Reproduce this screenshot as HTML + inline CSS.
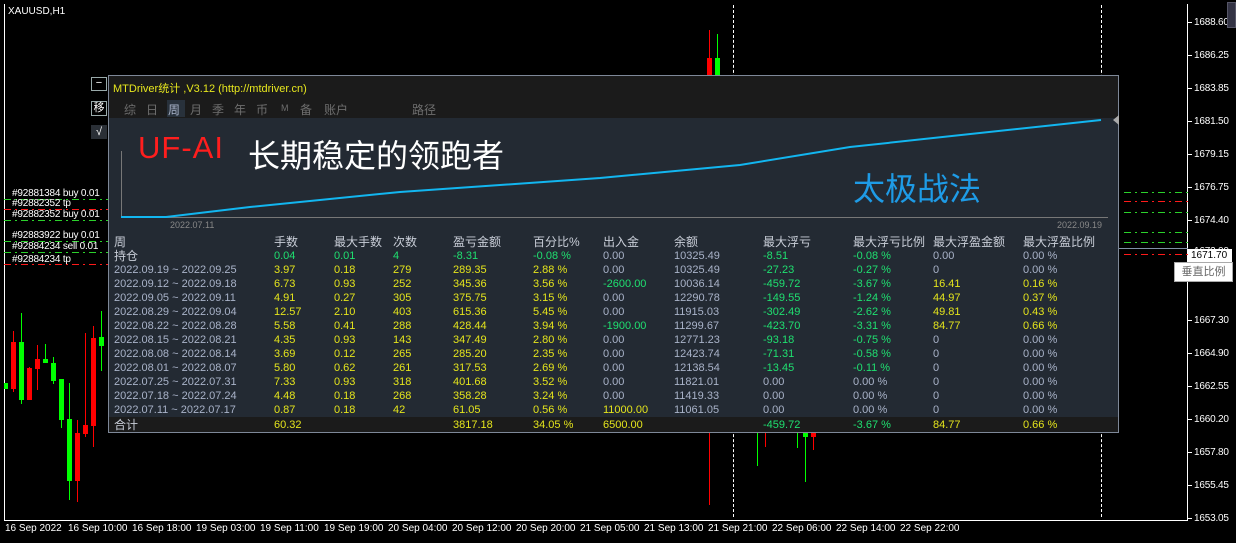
<!DOCTYPE html>
<html><head><meta charset="utf-8">
<style>
*{margin:0;padding:0;box-sizing:border-box}
body{width:1236px;height:543px;background:#000;position:relative;overflow:hidden;font-family:"Liberation Sans","Noto Sans CJK SC",sans-serif;font-size:11px}
.a{position:absolute;white-space:nowrap}
.pl{position:absolute;left:1194px;color:#fff;font-size:10px;letter-spacing:-0.2px}
.tk{position:absolute;left:1188px;width:4px;height:1px;background:#fff}
.tl{position:absolute;top:523px;color:#fff;font-size:10px}
.ol{position:absolute;left:12px;color:#fff;font-size:10px;line-height:11px;letter-spacing:-0.2px}
.hl{position:absolute;height:1px}
.g{background:repeating-linear-gradient(90deg,#2bd12b 0 7px,transparent 7px 11px,#2bd12b 11px 13px,transparent 13px 17px)}
.r{background:repeating-linear-gradient(90deg,#ff1a1a 0 7px,transparent 7px 11px,#ff1a1a 11px 13px,transparent 13px 17px)}
.tab{position:absolute;top:101px;color:#6e6e6e;font-size:12px}
.row{position:absolute;left:114px;height:14px;line-height:14px;font-size:11px}
.row span{position:absolute;top:0;white-space:nowrap}
.w{color:#a9b3c9}.y{color:#e4e41c}.gr{color:#1fe070}.h{color:#c9ced8}
</style></head><body>
<div class="a" style="left:8px;top:6px;color:#fff;font-size:10px">XAUUSD,H1</div>
<div class="a" style="left:4px;top:4px;width:1184px;height:517px;border:1px solid #fff;border-top:none"></div>
<div class="a" style="left:1101px;top:5px;width:0;height:512px;border-left:1px dashed #fff"></div>
<div class="a" style="left:733px;top:5px;width:0;height:512px;border-left:1px dashed #fff"></div>

<div class="pl" style="top:17px">1688.60</div><div class="tk" style="top:22px"></div>
<div class="pl" style="top:50px">1686.25</div><div class="tk" style="top:55px"></div>
<div class="pl" style="top:83px">1683.85</div><div class="tk" style="top:88px"></div>
<div class="pl" style="top:116px">1681.50</div><div class="tk" style="top:121px"></div>
<div class="pl" style="top:149px">1679.15</div><div class="tk" style="top:154px"></div>
<div class="pl" style="top:182px">1676.75</div><div class="tk" style="top:187px"></div>
<div class="pl" style="top:215px">1674.40</div><div class="tk" style="top:220px"></div>
<div class="pl" style="top:246px">1672.00</div>
<div class="a" style="left:1188px;top:249px;width:44px;height:14px;background:#fff;color:#000;font-size:10px;padding-left:3px;line-height:14px">1671.70</div>
<div class="a" style="left:1118px;top:248px;width:70px;height:1px;background:#8090a8"></div>
<div class="a" style="left:1174px;top:262px;width:59px;height:20px;background:#fff;border:1px solid #aaa;color:#666;font-size:11px;line-height:18px;text-align:center">垂直比例</div>
<div class="pl" style="top:315px">1667.30</div><div class="tk" style="top:320px"></div>
<div class="pl" style="top:348px">1664.90</div><div class="tk" style="top:353px"></div>
<div class="pl" style="top:381px">1662.55</div><div class="tk" style="top:386px"></div>
<div class="pl" style="top:414px">1660.20</div><div class="tk" style="top:419px"></div>
<div class="pl" style="top:447px">1657.80</div><div class="tk" style="top:452px"></div>
<div class="pl" style="top:480px">1655.45</div><div class="tk" style="top:485px"></div>
<div class="pl" style="top:513px">1653.05</div><div class="tk" style="top:518px"></div>
<div class="a" style="left:1227px;top:2px;width:9px;height:26px;background:#334;border:1px solid #556"></div>

<div class="tl" style="left:5px">16 Sep 2022</div>
<div class="tl" style="left:68px">16 Sep 10:00</div>
<div class="tl" style="left:132px">16 Sep 18:00</div>
<div class="tl" style="left:196px">19 Sep 03:00</div>
<div class="tl" style="left:260px">19 Sep 11:00</div>
<div class="tl" style="left:324px">19 Sep 19:00</div>
<div class="tl" style="left:388px">20 Sep 04:00</div>
<div class="tl" style="left:452px">20 Sep 12:00</div>
<div class="tl" style="left:516px">20 Sep 20:00</div>
<div class="tl" style="left:580px">21 Sep 05:00</div>
<div class="tl" style="left:644px">21 Sep 13:00</div>
<div class="tl" style="left:708px">21 Sep 21:00</div>
<div class="tl" style="left:772px">22 Sep 06:00</div>
<div class="tl" style="left:836px">22 Sep 14:00</div>
<div class="tl" style="left:900px">22 Sep 22:00</div>

<svg class="a" style="left:0;top:0" width="1236" height="543">
<g stroke-width="1">
<rect x="4" y="383" width="4" height="6" fill="#0f0"/>
<line x1="13.5" y1="331" x2="13.5" y2="392" stroke="#f00"/><rect x="11" y="342" width="5" height="47" fill="#f00"/>
<line x1="21.5" y1="313" x2="21.5" y2="404" stroke="#0f0"/><rect x="19" y="342" width="5" height="58" fill="#0f0"/>
<line x1="29.5" y1="367" x2="29.5" y2="400" stroke="#f00"/><rect x="27" y="368" width="5" height="32" fill="#f00"/>
<line x1="37.5" y1="345" x2="37.5" y2="390" stroke="#f00"/><rect x="35" y="359" width="5" height="10" fill="#f00"/>
<line x1="45.5" y1="344" x2="45.5" y2="363" stroke="#0f0"/><rect x="43" y="359" width="5" height="4" fill="#0f0"/>
<line x1="53.5" y1="357" x2="53.5" y2="384" stroke="#0f0"/><rect x="51" y="363" width="5" height="18" fill="#0f0"/>
<line x1="61.5" y1="379" x2="61.5" y2="428" stroke="#0f0"/><rect x="59" y="379" width="5" height="41" fill="#0f0"/>
<line x1="69.5" y1="383" x2="69.5" y2="500" stroke="#0f0"/><rect x="67" y="419" width="5" height="62" fill="#0f0"/>
<line x1="77.5" y1="420" x2="77.5" y2="502" stroke="#f00"/><rect x="75" y="433" width="5" height="48" fill="#f00"/>
<line x1="85.5" y1="333" x2="85.5" y2="437" stroke="#f00"/><rect x="83" y="425" width="5" height="9" fill="#f00"/>
<line x1="93.5" y1="326" x2="93.5" y2="447" stroke="#f00"/><rect x="91" y="338" width="5" height="88" fill="#f00"/>
<line x1="101.5" y1="311" x2="101.5" y2="371" stroke="#0f0"/><rect x="99" y="337" width="5" height="9" fill="#0f0"/>
<line x1="709.5" y1="30" x2="709.5" y2="77" stroke="#f00"/><rect x="707" y="58" width="5" height="19" fill="#f00"/>
<line x1="717.5" y1="34" x2="717.5" y2="77" stroke="#0f0"/><rect x="715" y="58" width="5" height="19" fill="#0f0"/>
<line x1="709.5" y1="432" x2="709.5" y2="505" stroke="#f00"/>
<line x1="757.5" y1="432" x2="757.5" y2="466" stroke="#0f0"/>
<line x1="765.5" y1="432" x2="765.5" y2="447" stroke="#f00"/>
<line x1="797.5" y1="432" x2="797.5" y2="448" stroke="#0f0"/>
<line x1="805.5" y1="432" x2="805.5" y2="482" stroke="#0f0"/><rect x="803" y="432" width="5" height="5" fill="#0f0"/>
<line x1="813.5" y1="432" x2="813.5" y2="450" stroke="#f00"/><rect x="811" y="432" width="5" height="5" fill="#f00"/>
</g></svg>

<div class="hl g" style="left:4px;top:199px;width:104px"></div>
<div class="hl r" style="left:4px;top:209px;width:104px"></div>
<div class="hl g" style="left:4px;top:220px;width:104px"></div>
<div class="hl g" style="left:4px;top:241px;width:104px"></div>
<div class="hl g" style="left:4px;top:252px;width:104px"></div>
<div class="hl r" style="left:4px;top:264px;width:104px"></div>
<div class="hl g" style="left:1124px;top:192px;width:64px"></div>
<div class="hl r" style="left:1124px;top:201px;width:64px"></div>
<div class="hl g" style="left:1124px;top:212px;width:64px"></div>
<div class="hl g" style="left:1124px;top:232px;width:64px"></div>
<div class="hl g" style="left:1124px;top:242px;width:64px"></div>
<div class="hl r" style="left:1124px;top:254px;width:64px"></div>
<div class="ol" style="top:188px">#92881384 buy 0.01</div>
<div class="ol" style="top:198px">#92882352 tp</div>
<div class="ol" style="top:209px">#92882352 buy 0.01</div>
<div class="ol" style="top:230px">#92883922 buy 0.01</div>
<div class="ol" style="top:241px">#92884234 sell 0.01</div>
<div class="ol" style="top:254px">#92884234 tp</div>

<div class="a" style="left:91px;top:77px;width:16px;height:14px;border:1px solid #9aa;color:#fff;font-size:11px;line-height:11px;text-align:center">−</div>
<div class="a" style="left:91px;top:101px;width:16px;height:15px;border:1px solid #9aa;color:#fff;font-size:11px;line-height:13px;text-align:center">移</div>
<div class="a" style="left:91px;top:125px;width:16px;height:14px;background:#2a2f36;color:#fff;font-size:11px;line-height:14px;text-align:center">√</div>

<div class="a" style="left:108px;top:75px;width:1011px;height:358px;background:#232a33;border:1px solid #7e8898"></div>
<div class="a" style="left:109px;top:76px;width:1009px;height:42px;background:#1b1b1b"></div>
<div class="a" style="left:113px;top:80px;color:#e6e61e;font-size:11px">MTDriver统计 ,V3.12 (http://mtdriver.cn)</div>
<div class="a" style="left:167px;top:100px;width:18px;height:17px;background:#28313b"></div>
<div class="tab" style="left:124px">综</div><div class="tab" style="left:146px">日</div>
<div class="tab" style="left:168px;color:#a9b3c9">周</div><div class="tab" style="left:190px">月</div>
<div class="tab" style="left:212px">季</div><div class="tab" style="left:234px">年</div>
<div class="tab" style="left:256px">币</div><div class="tab" style="left:281px;font-size:9px;top:103px">M</div>
<div class="tab" style="left:300px">备</div><div class="tab" style="left:324px">账户</div>
<div class="tab" style="left:412px">路径</div>

<svg class="a" style="left:108px;top:75px" width="1011" height="160">
<line x1="13.5" y1="76" x2="13.5" y2="143" stroke="#777"/>
<line x1="13" y1="142.5" x2="1000" y2="142.5" stroke="#777"/>
<polyline fill="none" stroke="#12b6f0" stroke-width="2" points="13,142 58,142 142,132 292,117 492,103 632,90 742,72 993,45"/>
<path d="M1011,40 L1005,45 L1011,50Z" fill="#aaa"/>
</svg>
<div class="a" style="left:138px;top:130px;color:#ff1e1e;font-size:31px;letter-spacing:1px">UF-AI</div>
<div class="a" style="left:248px;top:131px;color:#fff;font-size:32px">长期稳定的领跑者</div>
<div class="a" style="left:853px;top:164px;color:#1e9be6;font-size:32px">太极战法</div>
<div class="a" style="left:170px;top:220px;color:#888;font-size:9px">2022.07.11</div>
<div class="a" style="left:1057px;top:220px;color:#888;font-size:9px">2022.09.19</div>

<div class="a" style="left:109px;top:417px;width:1009px;height:15px;background:#1b1b1b"></div>

<div class="row h" style="top:235px;font-size:12px"><span style="left:0">周</span><span style="left:160px">手数</span><span style="left:220px">最大手数</span><span style="left:279px">次数</span><span style="left:339px">盈亏金额</span><span style="left:419px">百分比%</span><span style="left:489px">出入金</span><span style="left:560px">余额</span><span style="left:649px">最大浮亏</span><span style="left:739px">最大浮亏比例</span><span style="left:819px">最大浮盈金额</span><span style="left:909px">最大浮盈比例</span></div>
<div class="row" style="top:249px"><span class="h" style="left:0;font-size:12px">持仓</span><span class="gr" style="left:160px">0.04</span><span class="gr" style="left:220px">0.01</span><span class="gr" style="left:279px">4</span><span class="gr" style="left:339px">-8.31</span><span class="gr" style="left:419px">-0.08 %</span><span class="w" style="left:489px">0.00</span><span class="w" style="left:560px">10325.49</span><span class="gr" style="left:649px">-8.51</span><span class="gr" style="left:739px">-0.08 %</span><span class="w" style="left:819px">0.00</span><span class="w" style="left:909px">0.00 %</span></div>
<div class="row" style="top:263px"><span class="w" style="left:0">2022.09.19 ~ 2022.09.25</span><span class="y" style="left:160px">3.97</span><span class="y" style="left:220px">0.18</span><span class="y" style="left:279px">279</span><span class="y" style="left:339px">289.35</span><span class="y" style="left:419px">2.88 %</span><span class="w" style="left:489px">0.00</span><span class="w" style="left:560px">10325.49</span><span class="gr" style="left:649px">-27.23</span><span class="gr" style="left:739px">-0.27 %</span><span class="w" style="left:819px">0</span><span class="w" style="left:909px">0.00 %</span></div>
<div class="row" style="top:277px"><span class="w" style="left:0">2022.09.12 ~ 2022.09.18</span><span class="y" style="left:160px">6.73</span><span class="y" style="left:220px">0.93</span><span class="y" style="left:279px">252</span><span class="y" style="left:339px">345.36</span><span class="y" style="left:419px">3.56 %</span><span class="gr" style="left:489px">-2600.00</span><span class="w" style="left:560px">10036.14</span><span class="gr" style="left:649px">-459.72</span><span class="gr" style="left:739px">-3.67 %</span><span class="y" style="left:819px">16.41</span><span class="y" style="left:909px">0.16 %</span></div>
<div class="row" style="top:291px"><span class="w" style="left:0">2022.09.05 ~ 2022.09.11</span><span class="y" style="left:160px">4.91</span><span class="y" style="left:220px">0.27</span><span class="y" style="left:279px">305</span><span class="y" style="left:339px">375.75</span><span class="y" style="left:419px">3.15 %</span><span class="w" style="left:489px">0.00</span><span class="w" style="left:560px">12290.78</span><span class="gr" style="left:649px">-149.55</span><span class="gr" style="left:739px">-1.24 %</span><span class="y" style="left:819px">44.97</span><span class="y" style="left:909px">0.37 %</span></div>
<div class="row" style="top:305px"><span class="w" style="left:0">2022.08.29 ~ 2022.09.04</span><span class="y" style="left:160px">12.57</span><span class="y" style="left:220px">2.10</span><span class="y" style="left:279px">403</span><span class="y" style="left:339px">615.36</span><span class="y" style="left:419px">5.45 %</span><span class="w" style="left:489px">0.00</span><span class="w" style="left:560px">11915.03</span><span class="gr" style="left:649px">-302.49</span><span class="gr" style="left:739px">-2.62 %</span><span class="y" style="left:819px">49.81</span><span class="y" style="left:909px">0.43 %</span></div>
<div class="row" style="top:319px"><span class="w" style="left:0">2022.08.22 ~ 2022.08.28</span><span class="y" style="left:160px">5.58</span><span class="y" style="left:220px">0.41</span><span class="y" style="left:279px">288</span><span class="y" style="left:339px">428.44</span><span class="y" style="left:419px">3.94 %</span><span class="gr" style="left:489px">-1900.00</span><span class="w" style="left:560px">11299.67</span><span class="gr" style="left:649px">-423.70</span><span class="gr" style="left:739px">-3.31 %</span><span class="y" style="left:819px">84.77</span><span class="y" style="left:909px">0.66 %</span></div>
<div class="row" style="top:333px"><span class="w" style="left:0">2022.08.15 ~ 2022.08.21</span><span class="y" style="left:160px">4.35</span><span class="y" style="left:220px">0.93</span><span class="y" style="left:279px">143</span><span class="y" style="left:339px">347.49</span><span class="y" style="left:419px">2.80 %</span><span class="w" style="left:489px">0.00</span><span class="w" style="left:560px">12771.23</span><span class="gr" style="left:649px">-93.18</span><span class="gr" style="left:739px">-0.75 %</span><span class="w" style="left:819px">0</span><span class="w" style="left:909px">0.00 %</span></div>
<div class="row" style="top:347px"><span class="w" style="left:0">2022.08.08 ~ 2022.08.14</span><span class="y" style="left:160px">3.69</span><span class="y" style="left:220px">0.12</span><span class="y" style="left:279px">265</span><span class="y" style="left:339px">285.20</span><span class="y" style="left:419px">2.35 %</span><span class="w" style="left:489px">0.00</span><span class="w" style="left:560px">12423.74</span><span class="gr" style="left:649px">-71.31</span><span class="gr" style="left:739px">-0.58 %</span><span class="w" style="left:819px">0</span><span class="w" style="left:909px">0.00 %</span></div>
<div class="row" style="top:361px"><span class="w" style="left:0">2022.08.01 ~ 2022.08.07</span><span class="y" style="left:160px">5.80</span><span class="y" style="left:220px">0.62</span><span class="y" style="left:279px">261</span><span class="y" style="left:339px">317.53</span><span class="y" style="left:419px">2.69 %</span><span class="w" style="left:489px">0.00</span><span class="w" style="left:560px">12138.54</span><span class="gr" style="left:649px">-13.45</span><span class="gr" style="left:739px">-0.11 %</span><span class="w" style="left:819px">0</span><span class="w" style="left:909px">0.00 %</span></div>
<div class="row" style="top:375px"><span class="w" style="left:0">2022.07.25 ~ 2022.07.31</span><span class="y" style="left:160px">7.33</span><span class="y" style="left:220px">0.93</span><span class="y" style="left:279px">318</span><span class="y" style="left:339px">401.68</span><span class="y" style="left:419px">3.52 %</span><span class="w" style="left:489px">0.00</span><span class="w" style="left:560px">11821.01</span><span class="w" style="left:649px">0.00</span><span class="w" style="left:739px">0.00 %</span><span class="w" style="left:819px">0</span><span class="w" style="left:909px">0.00 %</span></div>
<div class="row" style="top:389px"><span class="w" style="left:0">2022.07.18 ~ 2022.07.24</span><span class="y" style="left:160px">4.48</span><span class="y" style="left:220px">0.18</span><span class="y" style="left:279px">268</span><span class="y" style="left:339px">358.28</span><span class="y" style="left:419px">3.24 %</span><span class="w" style="left:489px">0.00</span><span class="w" style="left:560px">11419.33</span><span class="w" style="left:649px">0.00</span><span class="w" style="left:739px">0.00 %</span><span class="w" style="left:819px">0</span><span class="w" style="left:909px">0.00 %</span></div>
<div class="row" style="top:403px"><span class="w" style="left:0">2022.07.11 ~ 2022.07.17</span><span class="y" style="left:160px">0.87</span><span class="y" style="left:220px">0.18</span><span class="y" style="left:279px">42</span><span class="y" style="left:339px">61.05</span><span class="y" style="left:419px">0.56 %</span><span class="y" style="left:489px">11000.00</span><span class="w" style="left:560px">11061.05</span><span class="w" style="left:649px">0.00</span><span class="w" style="left:739px">0.00 %</span><span class="w" style="left:819px">0</span><span class="w" style="left:909px">0.00 %</span></div>
<div class="row" style="top:418px"><span class="h" style="left:0;font-size:12px">合计</span><span class="y" style="left:160px">60.32</span><span class="y" style="left:339px">3817.18</span><span class="y" style="left:419px">34.05 %</span><span class="y" style="left:489px">6500.00</span><span class="gr" style="left:649px">-459.72</span><span class="gr" style="left:739px">-3.67 %</span><span class="y" style="left:819px">84.77</span><span class="y" style="left:909px">0.66 %</span></div>
</body></html>
